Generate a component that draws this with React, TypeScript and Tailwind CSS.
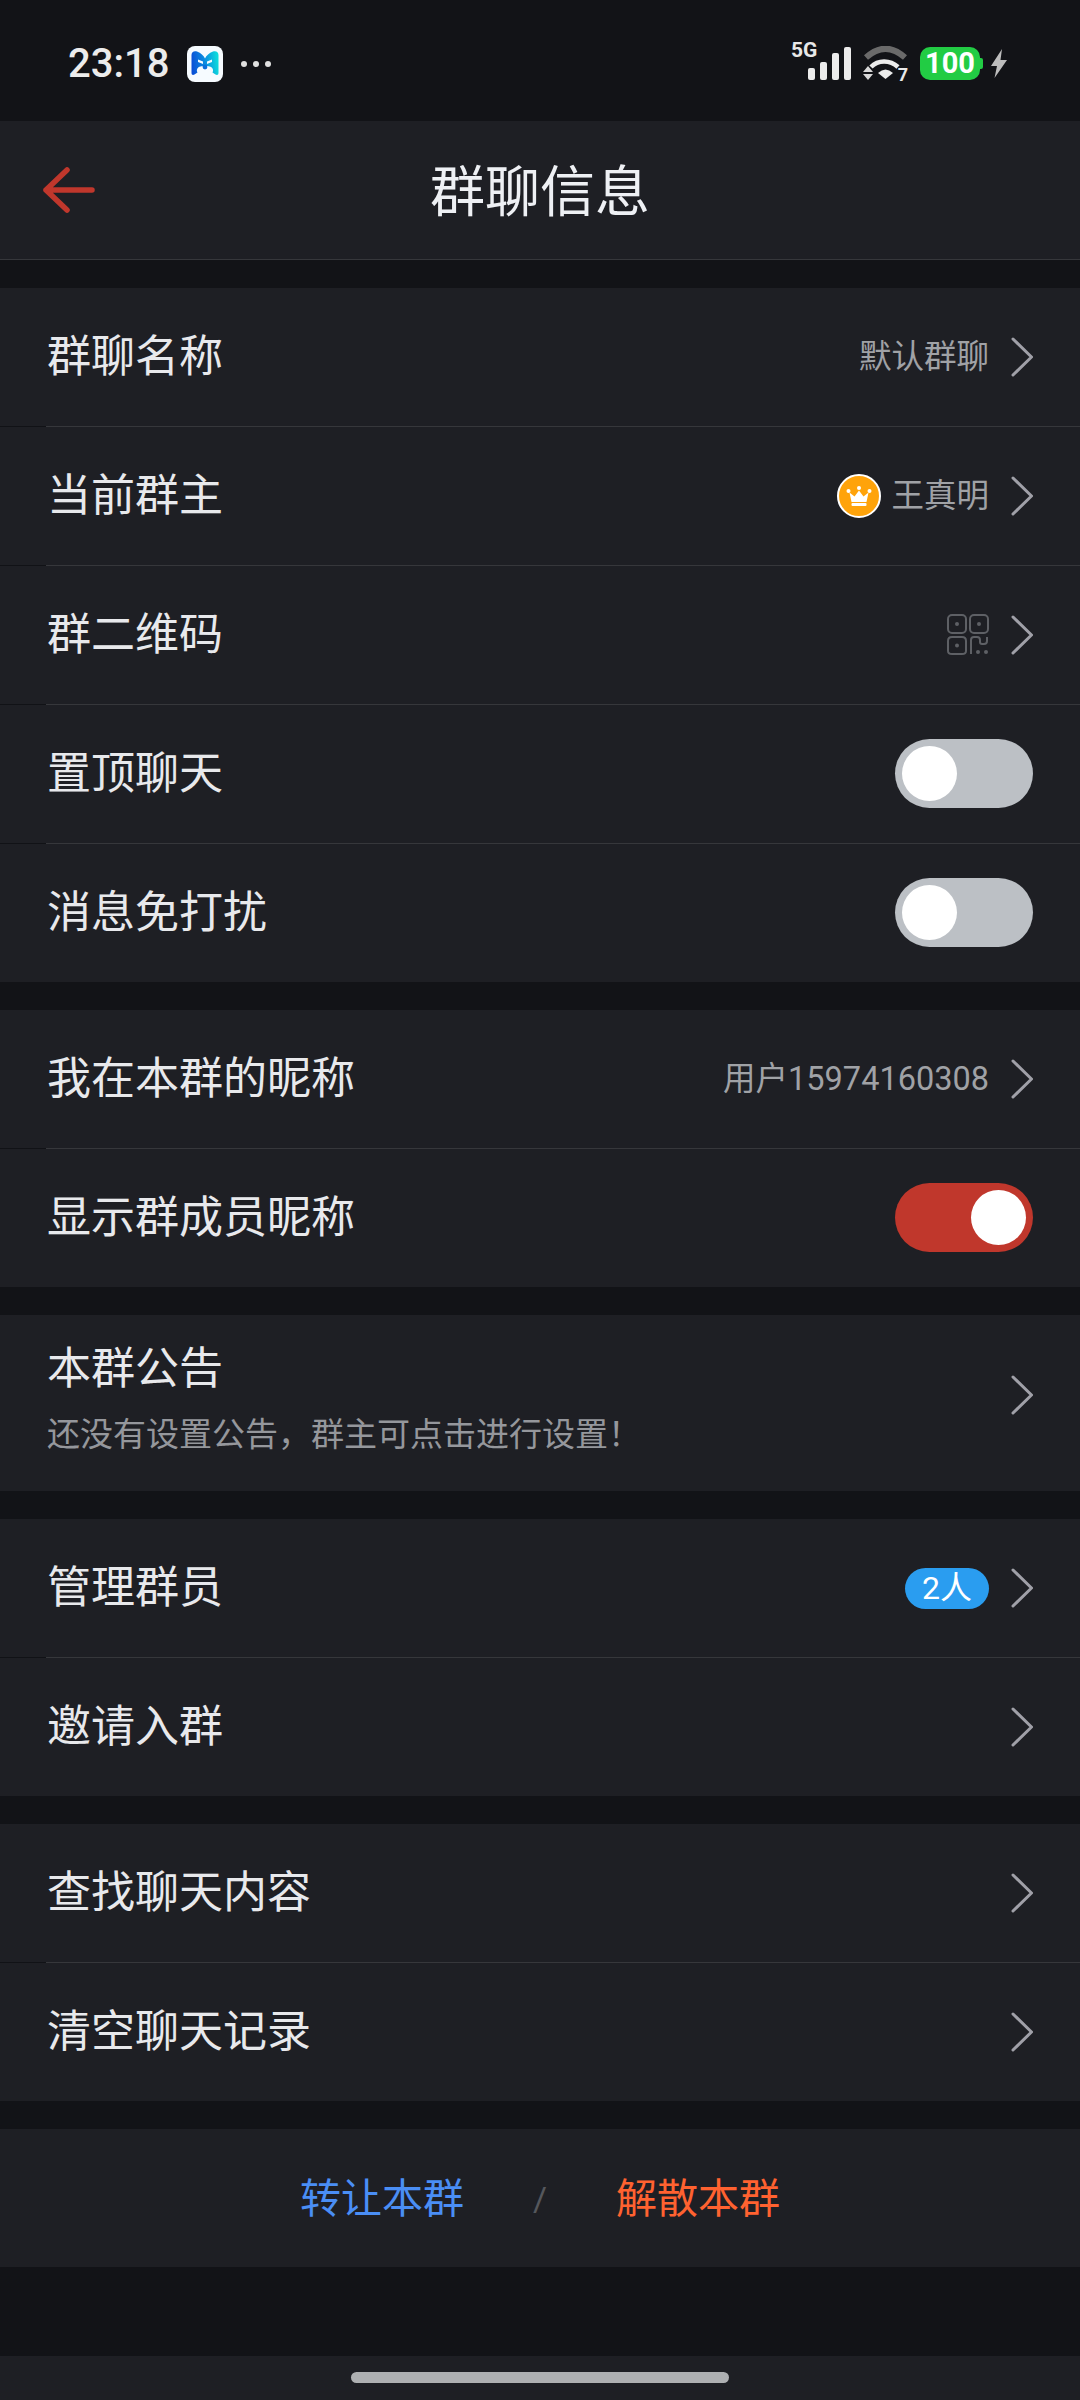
import type { ReactNode } from "react";

function Chevron() {
  return (
    <svg width="22" height="41" viewBox="0 0 22 41" fill="none" stroke="#a0a0a8" strokeWidth="3" strokeLinecap="round" strokeLinejoin="round" className="shrink-0">
      <path d="M2 2L20.5 20L2 38" />
    </svg>
  );
}

function Toggle({ on }: { on?: boolean }) {
  return (
    <div className={`mb-px flex h-[69px] w-[138px] items-center rounded-full px-[7px] ${on ? "justify-end bg-[#c0372c]" : "justify-start bg-[#bcc0c5]"}`}>
      <div className="h-[55px] w-[55px] rounded-full bg-white" />
    </div>
  );
}

function Divider() {
  return (
    <div className="flex h-px">
      <div className="w-[46px] bg-[#111216]" />
      <div className="flex-1 bg-[#36373b]" />
    </div>
  );
}

function Row({ label, children }: { label: string; children?: ReactNode }) {
  return (
    <div className="flex h-[138px] items-center justify-between pl-[47px] pr-[47px]">
      <span className="text-[44px] leading-none text-[#e8e9ec]">{label}</span>
      <div className="flex items-center">{children}</div>
    </div>
  );
}

function Value({ text }: { text: string }) {
  return <span className="mr-[22px] text-[32.5px] leading-none text-[#a0a2a6]">{text}</span>;
}

function Crown() {
  return (
    <div className="mr-[10px] flex h-[44px] w-[44px] items-center justify-center rounded-full border-2 border-white bg-[#ffa30a]">
      <svg width="26" height="22" viewBox="0 0 26 22" fill="#fff">
        <path d="M13 5.5L17.5 11.5L22.5 7.5L20.5 17H5.5L3.5 7.5L8.5 11.5Z" />
        <circle cx="13" cy="3" r="2" />
        <circle cx="2.5" cy="6" r="2" />
        <circle cx="23.5" cy="6" r="2" />
        <rect x="5.5" y="18" width="15" height="3" rx="1" />
      </svg>
    </div>
  );
}

function QrIcon() {
  return (
    <svg width="42" height="42" viewBox="0 0 42 42" fill="none" stroke="#5e6065" strokeWidth="2" className="mr-[22px]">
      <rect x="1" y="1" width="18" height="18" rx="4" />
      <rect x="23" y="1" width="18" height="18" rx="4" />
      <path d="M19 27V37C19 39 17.5 40 15 40H5C2.5 40 1 39 1 37V27C1 24.5 2.5 23 5 23H15C17.5 23 19 24.5 19 27Z" />
      <path d="M24 40V26C24 24 25 23 27 23H30C32 23 33 24 33 26V28C33 29.5 34 30 35 30H37C39 30 40 29 40 27V23" />
      <g fill="#5e6065" stroke="none">
        <circle cx="10" cy="10" r="2" />
        <circle cx="32" cy="10" r="2" />
        <circle cx="10" cy="31.5" r="2" />
        <circle cx="31" cy="38" r="2" />
        <circle cx="39" cy="38" r="2" />
      </g>
    </svg>
  );
}

function AppIcon() {
  return (
    <svg width="36" height="36" viewBox="0 0 36 36" className="ml-[18px]">
      <defs>
        <linearGradient id="mLogo" x1="0" y1="0.4" x2="1" y2="0.3">
          <stop offset="0" stopColor="#0a4fd6" />
          <stop offset="0.5" stopColor="#0a8fe0" />
          <stop offset="1" stopColor="#0fe0dc" />
        </linearGradient>
      </defs>
      <rect width="36" height="36" rx="8" fill="#f6fbff" />
      <path d="M4.5 9C4.5 6 7 4.5 10 5.5C14 7 16.5 9.5 18 12.5C19.5 9.5 22 7 26 5.5C29 4.5 31.5 6 31.5 9V27C31.5 29 30 29.5 28.5 28.5L25.5 26.5C27 24 25.5 21 22.5 20.5C21 20.2 20 20 18 20C16 20 15 20.2 13.5 20.5C10.5 21 9 24 10.5 26.5L7.5 28.5C6 29.5 4.5 29 4.5 27Z" fill="url(#mLogo)" />
      <path d="M11 13.5L16 15.5V18L11 16ZM25 13.5L20 15.5V18L25 16Z" fill="#f6fbff" />
      <circle cx="18" cy="21" r="2.4" fill="#0a6fdc" />
    </svg>
  );
}

function SignalIcon() {
  return (
    <div className="relative mr-[12px] flex h-[33px] w-[60px] items-end justify-end gap-[5px]">
      <span className="absolute -top-[7px] left-0 text-[21px] font-bold leading-none text-[#e8e8e8]">5G</span>
      <div className="h-[12px] w-[7px] rounded-[2px] bg-[#ececec]" />
      <div className="h-[18px] w-[7px] rounded-[2px] bg-[#ececec]" />
      <div className="h-[27px] w-[7px] rounded-[2px] bg-[#ececec]" />
      <div className="h-[33px] w-[7px] rounded-[2px] bg-[#ececec]" />
    </div>
  );
}

function WifiIcon() {
  return (
    <div className="relative mr-[12px] h-[35px] w-[45px]">
      <svg width="45" height="35" viewBox="0 0 45 35" fill="none">
        <path d="M3 11.5Q22.5 -6 42 11.5" stroke="#6a6a6a" strokeWidth="6" />
        <path d="M8 21C15 13.5 27 13.5 35 21" stroke="#ececec" strokeWidth="4.5" />
        <path d="M15 27Q22.5 20 30 27L22.5 33Z" fill="#ececec" />
        <path d="M5 20L10 26H0Z M5 34L0 28H10Z" fill="#d8d8d8" />
      </svg>
      <span className="absolute -bottom-[3px] right-0 text-[18px] font-bold leading-none text-[#e8e8e8]">7</span>
    </div>
  );
}

function Battery() {
  return (
    <div className="mr-[8px] flex items-center">
      <div className="flex h-[33px] w-[60px] items-center justify-center rounded-[10px] bg-[#22cc44] text-[29px] font-bold leading-none text-white">
        100
      </div>
      <div className="h-[11px] w-[3px] rounded-r-[2px] bg-[#22cc44]" />
    </div>
  );
}

export default function App() {
  return (
    <div className="flex h-[2400px] w-[1080px] flex-col bg-[#121317] font-['Roboto','Noto_Sans_CJK_SC',sans-serif]">
      {/* Status bar */}
      <div className="flex h-[121px] items-center justify-between pl-[68px] pr-[73px] pt-[6px]">
        <div className="flex items-center">
          <span className="text-[40px] font-medium leading-none text-[#ececec]">23:18</span>
          <AppIcon />
          <div className="ml-[18px] flex gap-[6px]">
            <div className="h-[6px] w-[6px] rounded-full bg-[#e0e0e0]" />
            <div className="h-[6px] w-[6px] rounded-full bg-[#e0e0e0]" />
            <div className="h-[6px] w-[6px] rounded-full bg-[#e0e0e0]" />
          </div>
        </div>
        <div className="flex items-center">
          <SignalIcon />
          <WifiIcon />
          <Battery />
          <svg width="16" height="29" viewBox="0 0 16 29" fill="#bdbdbd">
            <path d="M11 0L0 17H6L3.5 29L16 11H9.5Z" />
          </svg>
        </div>
      </div>

      {/* Header */}
      <div className="relative flex h-[139px] items-center justify-center border-b border-[#36373b] bg-[#1e1f24] pt-[4px]">
        <svg width="52" height="46" viewBox="0 0 52 46" fill="none" stroke="#c0372c" strokeWidth="5.5" strokeLinecap="round" strokeLinejoin="round" className="absolute left-[43px] top-[46px]">
          <path d="M24 3L3 23L24 43M3 23H49" />
        </svg>
        <span className="text-[55px] leading-none text-[#eef0f4]">群聊信息</span>
      </div>

      <div className="mt-[28px] flex flex-col gap-[28px]">
        <div className="bg-[#1e1f24]">
          <Row label="群聊名称">
            <Value text="默认群聊" />
            <Chevron />
          </Row>
          <Divider />
          <Row label="当前群主">
            <Crown />
            <Value text="王真明" />
            <Chevron />
          </Row>
          <Divider />
          <Row label="群二维码">
            <QrIcon />
            <Chevron />
          </Row>
          <Divider />
          <Row label="置顶聊天">
            <Toggle />
          </Row>
          <Divider />
          <Row label="消息免打扰">
            <Toggle />
          </Row>
        </div>

        <div className="bg-[#1e1f24]">
          <Row label="我在本群的昵称">
            <Value text="用户15974160308" />
            <Chevron />
          </Row>
          <Divider />
          <Row label="显示群成员昵称">
            <Toggle on />
          </Row>
        </div>

        <div className="flex h-[176px] items-center justify-between bg-[#1e1f24] pl-[47px] pr-[47px]">
          <div className="mb-[9px] flex flex-col gap-[24px]">
            <span className="text-[44px] leading-[48px] text-[#e8e9ec]">本群公告</span>
            <span className="text-[33px] leading-[36px] text-[#95979c]">还没有设置公告，群主可点击进行设置！</span>
          </div>
          <div className="mb-[16px]">
            <Chevron />
          </div>
        </div>

        <div className="bg-[#1e1f24]">
          <Row label="管理群员">
            <div className="mr-[22px] flex h-[41px] w-[84px] items-center justify-center rounded-full bg-[#2a9df0] text-[32px] leading-none text-white">
              2人
            </div>
            <Chevron />
          </Row>
          <Divider />
          <Row label="邀请入群">
            <Chevron />
          </Row>
        </div>

        <div className="bg-[#1e1f24]">
          <Row label="查找聊天内容">
            <Chevron />
          </Row>
          <Divider />
          <Row label="清空聊天记录">
            <Chevron />
          </Row>
        </div>

        {/* Footer actions */}
        <div className="flex h-[138px] items-center justify-center bg-[#1e1f24] pt-[2px]">
          <span className="text-[41px] leading-none text-[#4a8ef5]">转让本群</span>
          <span className="w-[152px] text-center text-[34px] leading-none text-[#55575c]">/</span>
          <span className="text-[41px] leading-none text-[#ff6230]">解散本群</span>
        </div>
      </div>

      {/* Home indicator */}
      <div className="mt-auto flex h-[44px] items-start justify-center bg-[#1e1f24] pt-[16px]">
        <div className="h-[11px] w-[378px] rounded-full bg-[#aeb0b2]" />
      </div>
    </div>
  );
}
